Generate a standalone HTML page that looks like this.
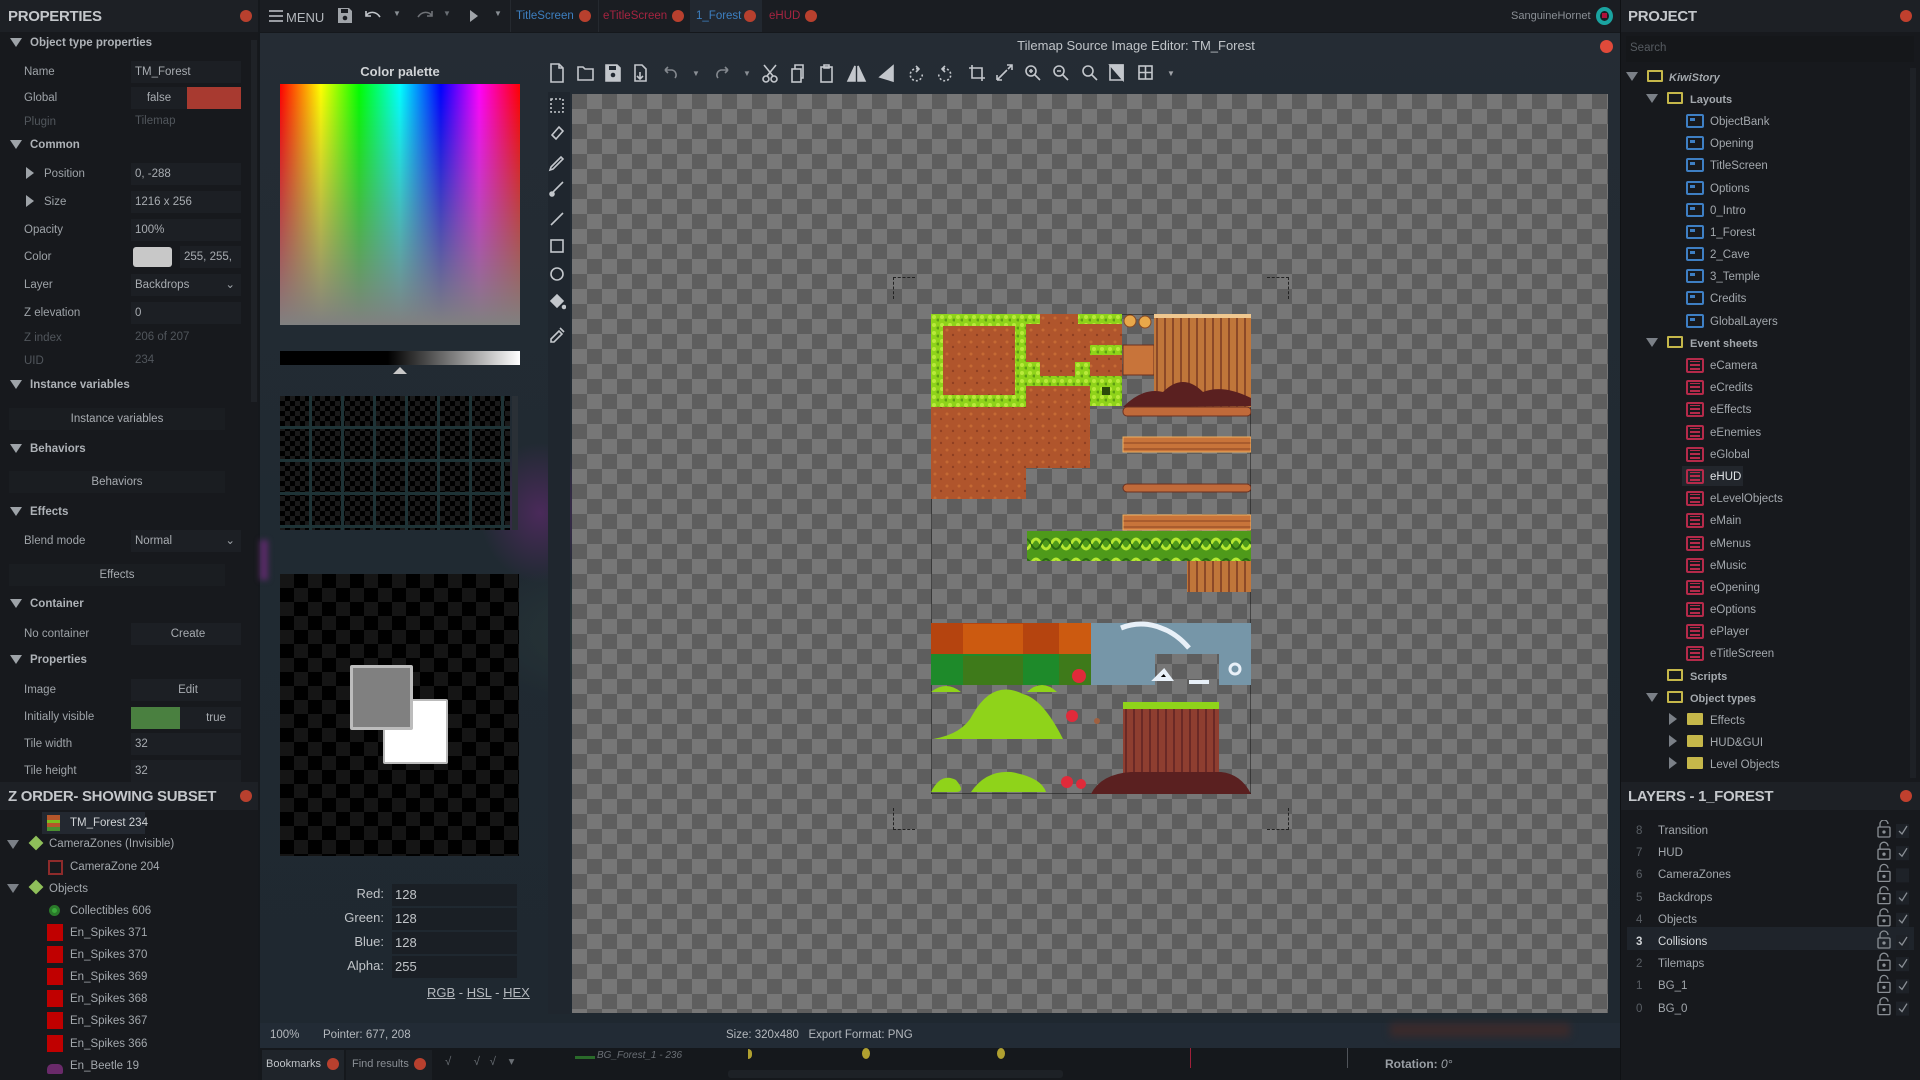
<!DOCTYPE html>
<html><head><meta charset="utf-8"><style>
*{margin:0;padding:0;box-sizing:border-box}
body{width:1920px;height:1080px;overflow:hidden;background:#15181c;font-family:"Liberation Sans",sans-serif;font-size:11.5px;color:#b4b8bd;position:relative}
.a{position:absolute;white-space:nowrap}
.hdr{font-weight:bold;font-size:15px;color:#c4c7cb;letter-spacing:-0.3px}
.dot{position:absolute;width:12px;height:12px;border-radius:50%;background:#b8402e}
.lbl{position:absolute;left:24px;color:#9ea3a8;line-height:14px}
.dim{color:#51565c}
.sec{position:absolute;left:10px;font-weight:bold;color:#aeb2b7}
.sec:before{content:"";display:inline-block;border-left:6px solid transparent;border-right:6px solid transparent;border-top:9px solid #9ea3a8;margin-right:8px;vertical-align:-1px}
.val{position:absolute;left:131px;width:110px;height:22px;background:#1c1f24;padding-left:4px;line-height:22px;color:#a8acb1}
.btn{position:absolute;left:30px;width:212px;height:22px;background:#1a1d21;text-align:center;line-height:22px;color:#a8acb1}
.tr{position:absolute;line-height:16px;color:#a3a8ad}
.tri{display:inline-block;border-left:6px solid transparent;border-right:6px solid transparent;border-top:9px solid #7b8087}
.fold{display:inline-block;width:16px;height:12px;border:2px solid #c5b74a;border-radius:1px;position:relative}
.lay{display:inline-block;width:18px;height:14px;border:2px solid #3e7fc4;border-radius:2px;position:relative}
.lay:after{content:"";position:absolute;left:2px;top:2px;width:5px;height:3px;background:#3e7fc4}
.ev{display:inline-block;width:18px;height:15px;border:2px solid #b52a4a;border-radius:2px;background:repeating-linear-gradient(#b52a4a 0 2px,transparent 2px 4px);background-clip:content-box;padding:1px 2px}
.ico{position:absolute;stroke:#c3c7cc;fill:none;stroke-width:1.6}
</style></head><body>

<!-- LEFT PANEL -->
<div class="a" style="left:0;top:0;width:258px;height:790px;background:#17191d"></div>
<div class="a" style="left:0;top:0;width:258px;height:32px;background:#1d2025"></div>
<div class="a hdr" style="left:8px;top:8px">PROPERTIES</div>
<div class="dot" style="left:240px;top:10px"></div>
<div class="a" style="left:251px;top:40px;width:6px;height:362px;background:#1f2227"></div>

<div class="sec" style="top:37px">Object type properties</div>
<div class="lbl" style="top:65px">Name</div><div class="val" style="top:61px">TM_Forest</div>
<div class="lbl" style="top:91px">Global</div><div class="val" style="top:87px;width:56px;text-align:center;padding:0">false</div><div class="a" style="left:187px;top:87px;width:54px;height:22px;background:#a83a30"></div>
<div class="lbl dim" style="top:115px">Plugin</div><div class="a dim" style="left:135px;top:115px">Tilemap</div>
<div class="sec" style="top:139px">Common</div>
<div class="lbl" style="top:167px;left:26px"><span style="display:inline-block;border-top:6px solid transparent;border-bottom:6px solid transparent;border-left:8px solid #9ea3a8;vertical-align:-2px;margin-right:10px"></span>Position</div><div class="val" style="top:163px">0, -288</div>
<div class="lbl" style="top:195px;left:26px"><span style="display:inline-block;border-top:6px solid transparent;border-bottom:6px solid transparent;border-left:8px solid #9ea3a8;vertical-align:-2px;margin-right:10px"></span>Size</div><div class="val" style="top:191px">1216 x 256</div>
<div class="lbl" style="top:223px">Opacity</div><div class="val" style="top:219px">100%</div>
<div class="lbl" style="top:250px">Color</div><div class="a" style="left:133px;top:247px;width:39px;height:20px;background:#c8c8c8;border-radius:3px"></div><div class="val" style="top:246px;left:180px;width:61px">255, 255,</div>
<div class="lbl" style="top:278px">Layer</div><div class="val" style="top:274px">Backdrops<span style="position:absolute;right:6px;color:#9ea3a8">⌄</span></div>
<div class="lbl" style="top:306px">Z elevation</div><div class="val" style="top:302px">0</div>
<div class="lbl dim" style="top:331px">Z index</div><div class="a dim" style="left:135px;top:331px">206 of 207</div>
<div class="lbl dim" style="top:354px">UID</div><div class="a dim" style="left:135px;top:354px">234</div>
<div class="sec" style="top:379px">Instance variables</div>
<div class="btn" style="top:408px;left:9px;width:216px">Instance variables</div>
<div class="sec" style="top:443px">Behaviors</div>
<div class="btn" style="top:471px;left:9px;width:216px">Behaviors</div>
<div class="sec" style="top:506px">Effects</div>
<div class="lbl" style="top:534px">Blend mode</div><div class="val" style="top:530px">Normal<span style="position:absolute;right:6px;color:#9ea3a8">⌄</span></div>
<div class="btn" style="top:564px;left:9px;width:216px">Effects</div>
<div class="sec" style="top:598px">Container</div>
<div class="lbl" style="top:627px">No container</div><div class="val" style="top:623px;text-align:center">Create</div>
<div class="sec" style="top:654px">Properties</div>
<div class="lbl" style="top:683px">Image</div><div class="val" style="top:679px;text-align:center">Edit</div>
<div class="lbl" style="top:710px">Initially visible</div><div class="val" style="top:707px;padding-left:60px;text-align:center">true</div><div class="a" style="left:131px;top:707px;width:49px;height:22px;background:#4a8040"></div>
<div class="lbl" style="top:737px">Tile width</div><div class="val" style="top:733px">32</div>
<div class="lbl" style="top:764px">Tile height</div><div class="val" style="top:760px">32</div>

<!-- Z ORDER -->
<div class="a" style="left:0;top:782px;width:258px;height:298px;background:#17191d"></div>
<div class="a" style="left:0;top:782px;width:258px;height:28px;background:#1d2025"></div>
<div class="a hdr" style="left:8px;top:788px">Z ORDER- SHOWING SUBSET</div>
<div class="dot" style="left:240px;top:790px"></div>
<div class="a" style="left:42px;top:812px;width:103px;height:22px;background:#232830"></div>
<div class="a" style="left:47px;top:815px;width:13px;height:16px;background:linear-gradient(#b5562a 0 30%,#7bbf20 30% 50%,#b5562a 50% 75%,#4a8f30 75%)"></div>
<div class="tr" style="left:70px;top:815px;color:#d0d3d6">TM_Forest 234</div>
<div class="tr" style="left:7px;top:838px"><span class="tri"></span></div>
<div class="a" style="left:29px;top:836px;width:14px;height:14px;background:#8fbf5a;transform:rotate(45deg) scale(.75)"></div>
<div class="tr" style="left:49px;top:836px">CameraZones (Invisible)</div>
<div class="a" style="left:48px;top:860px;width:15px;height:15px;border:2px solid #8e2b2b"></div>
<div class="tr dim" style="left:70px;top:859px">CameraZone 204</div>
<div class="tr" style="left:7px;top:882px"><span class="tri"></span></div>
<div class="a" style="left:29px;top:880px;width:14px;height:14px;background:#8fbf5a;transform:rotate(45deg) scale(.75)"></div>
<div class="tr" style="left:49px;top:881px">Objects</div>
<div class="a" style="left:49px;top:905px;width:11px;height:11px;border-radius:50%;background:#3aa83a;border:3px solid #2a7a2a"></div>
<div class="tr" style="left:70px;top:903px">Collectibles 606</div>
<div class="a" style="left:47px;top:924px;width:16px;height:17px;background:#c00000"></div><div class="tr" style="left:70px;top:925px">En_Spikes 371</div>
<div class="a" style="left:47px;top:946px;width:16px;height:17px;background:#c00000"></div><div class="tr" style="left:70px;top:947px">En_Spikes 370</div>
<div class="a" style="left:47px;top:968px;width:16px;height:17px;background:#c00000"></div><div class="tr" style="left:70px;top:969px">En_Spikes 369</div>
<div class="a" style="left:47px;top:990px;width:16px;height:17px;background:#c00000"></div><div class="tr" style="left:70px;top:991px">En_Spikes 368</div>
<div class="a" style="left:47px;top:1012px;width:16px;height:17px;background:#c00000"></div><div class="tr" style="left:70px;top:1013px">En_Spikes 367</div>
<div class="a" style="left:47px;top:1035px;width:16px;height:17px;background:#c00000"></div><div class="tr" style="left:70px;top:1036px">En_Spikes 366</div>
<div class="a" style="left:47px;top:1064px;width:16px;height:10px;background:#6a2a6a;border-radius:5px 5px 2px 2px"></div><div class="tr" style="left:70px;top:1058px">En_Beetle 19</div>

<!-- TOP BAR middle -->
<div class="a" style="left:260px;top:0;width:1360px;height:32px;background:#1a1d22"></div>
<svg class="ico" style="left:268px;top:9px" width="16" height="14"><path d="M1 2h14M1 7h14M1 12h14"/></svg>
<div class="a" style="left:286px;top:10px;color:#b4b8bd;font-size:13px">MENU</div>
<svg class="a" style="left:337px;top:7px" width="16" height="17"><path d="M1 1h11l3 3v12H1z" fill="#a0a4a9"/><rect x="4" y="2" width="7" height="4" fill="#1a1d22"/><circle cx="8" cy="11" r="2.3" fill="#1a1d22"/></svg>
<svg class="ico" style="left:364px;top:9px" width="20" height="12"><path d="M2 2v5h5M2 7c3-5 10-5 14 1"/></svg>
<div class="a" style="left:393px;top:9px;font-size:8px;color:#8a8f95">▼</div>
<svg class="ico" style="left:414px;top:9px;opacity:.5" width="20" height="12"><path d="M18 2v5h-5M18 7c-3-5-10-5-14 1"/></svg>
<div class="a" style="left:443px;top:9px;font-size:8px;color:#6a6f75">▼</div>
<svg class="a" style="left:469px;top:9px" width="10" height="14"><path d="M1 1l8 6-8 6z" fill="#a0a4a9"/></svg>
<div class="a" style="left:494px;top:9px;font-size:8px;color:#8a8f95">▼</div>
<div class="a" style="left:510px;top:0;width:88px;height:32px;border-left:1px solid #25292f"></div>
<div class="a" style="left:516px;top:10px;color:#3d7fc0">TitleScreen</div><div class="dot" style="left:579px;top:10px"></div>
<div class="a" style="left:598px;top:0;width:92px;height:32px;border-left:1px solid #25292f"></div>
<div class="a" style="left:603px;top:10px;color:#a52440">eTitleScreen</div><div class="dot" style="left:672px;top:10px"></div>
<div class="a" style="left:690px;top:0;width:72px;height:32px;background:#222830"></div>
<div class="a" style="left:696px;top:10px;color:#3d7fc0">1_Forest</div><div class="dot" style="left:744px;top:10px"></div>
<div class="a" style="left:769px;top:10px;color:#a52440">eHUD</div><div class="dot" style="left:805px;top:10px"></div>
<div class="a" style="left:1511px;top:10px;color:#8a8f95;font-size:11px">SanguineHornet</div>
<div class="a" style="left:1596px;top:7px;width:17px;height:18px;border-radius:50%;border:4px solid #1aa3a0"></div><div class="a" style="left:1602px;top:13px;width:5px;height:5px;background:#b0103a"></div>

<!-- EDITOR BG -->
<div class="a" style="left:260px;top:33px;width:1360px;height:1015px;background:radial-gradient(ellipse 60px 70px at 280px 480px,#4a2a5a,transparent),radial-gradient(ellipse 200px 80px at 400px 600px,#2a3a3a,transparent),linear-gradient(#252c34,#202a32 50%,#1f2830)"></div>
<div class="a" style="left:260px;top:540px;width:8px;height:40px;background:#5a2a68;filter:blur(3px)"></div>
<div class="a" style="left:1136px;top:38px;color:#c0c4c8;font-size:13px;transform:translateX(-50%)">Tilemap Source Image Editor: TM_Forest</div>
<div class="a" style="left:1600px;top:40px;width:13px;height:13px;border-radius:50%;background:#e04a3a"></div>

<!-- Color palette -->
<div class="a" style="left:400px;top:64px;color:#d0d3d6;font-weight:bold;font-size:13px;transform:translateX(-50%)">Color palette</div>
<div class="a" style="left:280px;top:84px;width:240px;height:241px;background:linear-gradient(transparent,#808080),linear-gradient(90deg,#f00,#ff0 17%,#0f0 33%,#0ff 50%,#00f 67%,#f0f 83%,#f00)"></div>
<div class="a" style="left:280px;top:351px;width:240px;height:14px;background:linear-gradient(90deg,#000 45%,#fff)"></div>
<div class="a" style="left:393px;top:367px;border-left:7px solid transparent;border-right:7px solid transparent;border-bottom:7px solid #c8c8c8"></div>
<div class="a" style="left:280px;top:396px;width:230px;height:134px;background:repeating-linear-gradient(90deg,transparent 0 29px,#1e3336 29px 32px),repeating-linear-gradient(transparent 0 30px,#1e3336 30px 33px),repeating-conic-gradient(#000 0 25%,#1a1a1a 0 50%) 0 0/10px 10px"></div>
<div class="a" style="left:512px;top:396px;width:6px;height:134px;background:#2a3036"></div>
<div class="a" style="left:280px;top:574px;width:239px;height:282px;background:repeating-conic-gradient(#000 0 25%,#151515 0 50%) 0 0/28px 28px"></div>
<div class="a" style="left:383px;top:699px;width:65px;height:65px;background:#fff;border:2px solid #bbb;border-radius:2px"></div>
<div class="a" style="left:350px;top:665px;width:63px;height:65px;background:#808080;border:3px solid #bcbcbc;border-radius:2px"></div>
<div class="a" style="left:300px;top:886px;width:84px;text-align:right;color:#c0c4c8;font-size:13px">Red:</div>
<div class="a" style="left:300px;top:910px;width:84px;text-align:right;color:#c0c4c8;font-size:13px">Green:</div>
<div class="a" style="left:300px;top:934px;width:84px;text-align:right;color:#c0c4c8;font-size:13px">Blue:</div>
<div class="a" style="left:300px;top:958px;width:84px;text-align:right;color:#c0c4c8;font-size:13px">Alpha:</div>
<div class="a" style="left:392px;top:884px;width:125px;height:22px;background:#1a1f25;padding-left:3px;line-height:22px;color:#c0c4c8;font-size:13px">128</div>
<div class="a" style="left:392px;top:908px;width:125px;height:22px;background:#1a1f25;padding-left:3px;line-height:22px;color:#c0c4c8;font-size:13px">128</div>
<div class="a" style="left:392px;top:932px;width:125px;height:22px;background:#1a1f25;padding-left:3px;line-height:22px;color:#c0c4c8;font-size:13px">128</div>
<div class="a" style="left:392px;top:956px;width:125px;height:22px;background:#1a1f25;padding-left:3px;line-height:22px;color:#c0c4c8;font-size:13px">255</div>
<div class="a" style="left:427px;top:985px;color:#b4b8bd;font-size:13px"><u>RGB</u> - <u>HSL</u> - <u>HEX</u></div>

<!-- tools column -->
<div class="a" style="left:548px;top:92px;width:22px;height:922px;background:#1f262e"></div>
<svg class="ico" style="left:548px;top:96px" width="18" height="250">
<rect x="3" y="3" width="12" height="13" stroke-dasharray="2 2"/>
<path d="M4 39l7-8 4 4-7 8z M4 39l3 3"/>
<path d="M3 71l10-10 2 2-10 10-3 1z"/>
<path d="M3 99l3-4 9-9"/><circle cx="4" cy="98" r="2" fill="#c3c7cc"/>
<path d="M3 129l12-12"/>
<rect x="3" y="144" width="12" height="12"/>
<circle cx="9" cy="178" r="6"/>
<path d="M3 205l6-6 6 6-6 6z" fill="#c3c7cc"/><circle cx="16" cy="211" r="1.5" fill="#c3c7cc"/>
<path d="M3 243l8-8 3 3-8 8-3 0z M12 232l4 4"/>
</svg>
<!-- top toolbar -->
<svg class="ico" style="left:548px;top:62px" width="640" height="22">
<g transform="translate(2,0)"><path d="M1 2h8l4 4v14H1z M9 2v4h4"/></g>
<g transform="translate(29,0)"><path d="M1 5h5l2 2h8v11H1z"/></g>
<g transform="translate(57,0)"><path d="M1 3h11l3 3v13H1z" fill="#c3c7cc"/><rect x="4" y="4" width="7" height="4" fill="#222a33" stroke="none"/><circle cx="8" cy="13" r="2.3" fill="#222a33" stroke="none"/></g>
<g transform="translate(86,0)"><path d="M1 3h7l4 4v12H1z M6 10v7 M3 14l3 3 3-3"/></g>
<g transform="translate(115,0)" opacity=".6"><path d="M2 8h7a5 5 0 0 1 3 8 M2 8l3-3M2 8l3 3"/></g>
<text x="144" y="14" font-size="8" fill="#8a8f95" stroke="none">▼</text>
<g transform="translate(166,0)" opacity=".6"><path d="M14 8h-7a5 5 0 0 0-3 8 M14 8l-3-3M14 8l-3 3"/></g>
<text x="195" y="14" font-size="8" fill="#8a8f95" stroke="none">▼</text>
<g transform="translate(214,0)"><circle cx="4" cy="17" r="3"/><circle cx="12" cy="17" r="3"/><path d="M5 14l9-11M11 14l-9-11"/></g>
<g transform="translate(243,0)"><rect x="1" y="7" width="9" height="13"/><path d="M4 7V3h8v13h-2"/></g>
<g transform="translate(271,0)"><rect x="2" y="5" width="11" height="15"/><path d="M5 3h5v3h-5z"/></g>
<g transform="translate(300,0)"><path d="M7 4v15h-7z M10 4v15h7z" fill="#c3c7cc"/></g>
<g transform="translate(331,0)"><path d="M14 4v15L1 15z" fill="#c3c7cc"/></g>
<g transform="translate(360,0)"><path d="M10 7a6 6 0 1 0 4 4" stroke-dasharray="2 2"/><path d="M8 4l3 3-3 3"/></g>
<g transform="translate(389,0)"><path d="M6 7a6 6 0 1 1-4 4" stroke-dasharray="2 2"/><path d="M8 4l-3 3 3 3"/></g>
<g transform="translate(420,0)"><path d="M4 3v13h13 M1 6h13v13"/></g>
<g transform="translate(448,0)"><path d="M1 18l10-10 M1 18v-5M1 18h5 M11 3h5v5M16 3l-4 4"/></g>
<g transform="translate(476,0)"><circle cx="7" cy="9" r="5"/><path d="M11 13l5 5 M5 9h4M7 7v4"/></g>
<g transform="translate(504,0)"><circle cx="7" cy="9" r="5"/><path d="M11 13l5 5 M5 9h4"/></g>
<g transform="translate(533,0)"><circle cx="7" cy="9" r="5"/><path d="M11 13l5 5"/></g>
<g transform="translate(561,0)"><path d="M1 3h13v15H1z"/><path d="M1 3l13 15V3z" fill="#c3c7cc"/></g>
<g transform="translate(590,0)"><rect x="1" y="4" width="13" height="13"/><path d="M7.5 4v13M1 10.5h13"/></g>
</svg>
<div class="a" style="left:1167px;top:69px;font-size:8px;color:#a0a4a9">▼</div>

<!-- canvas -->
<div class="a" style="left:572px;top:94px;width:1036px;height:919px;background:repeating-conic-gradient(#777 0 25%,#5e5e5e 0 50%) 0 0/30px 30px"></div>
<div class="a" style="left:893px;top:277px;width:22px;height:22px;border-left:1px dashed #222;border-top:1px dashed #222"></div>
<div class="a" style="left:1267px;top:277px;width:22px;height:22px;border-right:1px dashed #222;border-top:1px dashed #222"></div>
<div class="a" style="left:893px;top:808px;width:22px;height:22px;border-left:1px dashed #222;border-bottom:1px dashed #222"></div>
<div class="a" style="left:1267px;top:808px;width:22px;height:22px;border-right:1px dashed #222;border-bottom:1px dashed #222"></div>

<svg class="a" style="left:931px;top:314px" width="320" height="480" viewBox="0 0 320 480">
<defs>
<pattern id="d" width="12" height="12" patternUnits="userSpaceOnUse"><rect width="12" height="12" fill="#b0552c"/><circle cx="4" cy="4" r="1.5" fill="#c66a34"/><circle cx="10" cy="9" r="1.2" fill="#8f3f22"/></pattern>
<pattern id="g" width="8" height="8" patternUnits="userSpaceOnUse"><rect width="8" height="8" fill="#8fd31a"/><circle cx="3" cy="3" r="2" fill="#b8ea3a"/><circle cx="7" cy="6" r="1.5" fill="#5e9e12"/></pattern>
<pattern id="w" width="10" height="6" patternUnits="userSpaceOnUse"><rect width="10" height="6" fill="#c8743a"/><path d="M0 3h10" stroke="#8a4322"/></pattern>
<pattern id="v" width="20" height="20" patternUnits="userSpaceOnUse"><rect width="20" height="20" fill="#4e9a1a"/><path d="M0 10q5-10 10 0t10 0" stroke="#b6e832" stroke-width="3" fill="none"/><path d="M0 10q5 10 10 0t10 0" stroke="#2a6a12" stroke-width="2" fill="none"/></pattern>
<pattern id="t" width="8" height="8" patternUnits="userSpaceOnUse"><rect width="8" height="8" fill="#c0763a"/><path d="M2 0v8" stroke="#7a3a22" stroke-width="1.5"/></pattern>
<pattern id="t2" width="8" height="8" patternUnits="userSpaceOnUse"><rect width="8" height="8" fill="#8e3e30"/><path d="M3 0v8" stroke="#5e2222" stroke-width="1.5"/></pattern>
</defs>
<rect width="320" height="480" fill="none" stroke="#111" stroke-width="1"/>
<rect x="0" y="0" width="96" height="93" fill="url(#g)"/><rect x="12" y="12" width="72" height="69" fill="url(#d)"/>
<rect x="0" y="93" width="95" height="92" fill="url(#d)"/>
<rect x="95" y="0" width="96" height="62" fill="url(#d)"/>
<rect x="95" y="62" width="64" height="92" fill="url(#d)"/>
<rect x="95" y="0" width="14" height="10" fill="url(#g)"/><rect x="147" y="0" width="44" height="10" fill="url(#g)"/>
<rect x="95" y="62" width="64" height="10" fill="url(#g)"/><rect x="95" y="48" width="14" height="14" fill="url(#g)"/><rect x="144" y="48" width="15" height="14" fill="url(#g)"/>
<rect x="159" y="31" width="32" height="10" fill="url(#g)"/>
<rect x="159" y="62" width="32" height="30" fill="url(#g)"/><rect x="171" y="73" width="8" height="8" fill="#2a4a0a"/>
<circle cx="199" cy="7" r="6" fill="#e8a84a" stroke="#8a4a22"/><circle cx="214" cy="8" r="6" fill="#e8a84a" stroke="#8a4a22"/>
<rect x="192" y="31" width="31" height="30" fill="#c8743a" stroke="#6a3020"/>
<rect x="223" y="0" width="97" height="93" fill="url(#t)"/><rect x="223" y="0" width="97" height="4" fill="#f0c890"/>
<path d="M192 93q20-20 40-15q20-20 40 0q20-8 48 6v8z" fill="#5a2020"/>
<rect x="192" y="93" width="128" height="9" rx="4" fill="#c06a3a" stroke="#6a3020"/>
<rect x="192" y="123" width="128" height="15" fill="url(#w)" stroke="#f0b060"/>
<rect x="192" y="170" width="128" height="8" rx="4" fill="#c06a3a" stroke="#6a3020"/>
<rect x="192" y="201" width="128" height="15" fill="url(#w)" stroke="#f0b060"/>
<rect x="96" y="217" width="224" height="30" fill="url(#v)"/>
<rect x="256" y="247" width="64" height="31" fill="url(#t)"/>
<rect x="0" y="309" width="160" height="31" fill="#b5440f"/><rect x="32" y="310" width="60" height="30" fill="#cc5a10"/><rect x="128" y="309" width="32" height="31" fill="#cc5a10"/>
<rect x="0" y="340" width="160" height="31" fill="#1e8a2a"/><rect x="32" y="342" width="60" height="29" fill="#3e7a1a"/><rect x="128" y="340" width="32" height="31" fill="#3e7a1a"/>
<rect x="160" y="309" width="160" height="31" fill="#7696a8"/><rect x="160" y="340" width="64" height="31" fill="#7696a8"/><rect x="288" y="340" width="32" height="31" fill="#7696a8"/>
<rect x="224" y="309" width="32" height="31" fill="#7696a8"/><path d="M190 314q20-8 40 0q15 5 28 20" stroke="#e8f0f8" stroke-width="5" fill="none"/>
<path d="M225 365l8-8 6 8z M258 368h20" stroke="#e8f0f8" stroke-width="4"/><circle cx="304" cy="355" r="5" fill="none" stroke="#e8f0f8" stroke-width="3"/>
<path d="M0 378q15-12 30 0z" fill="#8fd31a"/><path d="M2 425q30-5 40-25q20-35 50-20q20 5 40 45z" fill="#8fd31a"/><path d="M96 378q15-14 30 0z" fill="#8fd31a"/>
<path d="M0 478q10-20 25-12q10 12 0 12z" fill="#8fd31a"/><path d="M40 478q15-22 40-20q30 5 35 20z" fill="#8fd31a"/>
<circle cx="148" cy="362" r="7" fill="#e02a3a"/><circle cx="141" cy="402" r="6" fill="#e02a3a"/><circle cx="136" cy="468" r="6" fill="#e02a3a"/><circle cx="150" cy="470" r="5" fill="#e02a3a"/><circle cx="166" cy="407" r="3" fill="#a06040"/>
<rect x="192" y="393" width="96" height="72" fill="url(#t2)"/><rect x="192" y="388" width="96" height="7" fill="#8fd31a"/>
<path d="M160 480q10-20 40-22h90q20 2 30 22z" fill="#5a2020"/>
</svg>

<!-- status bar -->
<div class="a" style="left:260px;top:1023px;width:1360px;height:25px;background:#222b35"></div>
<div class="a" style="left:1390px;top:1023px;width:180px;height:14px;background:#4a2a25;filter:blur(4px);opacity:.6"></div>
<div class="a" style="left:270px;top:1029px;color:#b4b8bd">100%</div>
<div class="a" style="left:323px;top:1029px;color:#b4b8bd">Pointer: 677, 208</div>
<div class="a" style="left:726px;top:1029px;color:#b4b8bd">Size: 320x480&nbsp;&nbsp;&nbsp;Export Format: PNG</div>
<div class="a" style="left:260px;top:1048px;width:1360px;height:32px;background:#15181c"></div>
<div class="a" style="left:262px;top:1050px;width:82px;height:30px;background:#1f242a"></div>
<div class="a" style="left:266px;top:1058px;color:#c0c4c8;font-size:11px">Bookmarks</div><div class="dot" style="left:327px;top:1058px"></div>
<div class="a" style="left:346px;top:1050px;width:86px;height:30px;background:#1b1f24"></div>
<div class="a" style="left:352px;top:1058px;color:#8a8f95;font-size:11px">Find results</div><div class="dot" style="left:414px;top:1058px"></div>
<div class="a" style="left:445px;top:1054px;color:#6a6f75">√ &nbsp;&nbsp;&nbsp;&nbsp;&nbsp; √ &nbsp; √ &nbsp;&nbsp; ▾ </div>
<div class="a" style="left:575px;top:1056px;width:20px;height:3px;background:#2a6a2a"></div>
<div class="a" style="left:597px;top:1050px;color:#6a6f75;font-style:italic;font-size:10px">BG_Forest_1 - 236</div>
<div class="a" style="left:748px;top:1049px;width:4px;height:10px;background:#b0a030;border-radius:0 5px 5px 0"></div>
<div class="a" style="left:862px;top:1048px;width:8px;height:11px;background:#b0a030;border-radius:50%"></div>
<div class="a" style="left:997px;top:1048px;width:8px;height:11px;background:#b0a030;border-radius:50%"></div>
<div class="a" style="left:1190px;top:1048px;width:1px;height:20px;background:#a0203a"></div>
<div class="a" style="left:1347px;top:1048px;width:1px;height:20px;background:#50545a"></div>
<div class="a" style="left:728px;top:1070px;width:335px;height:8px;background:#1d2126;border-radius:3px"></div>
<div class="a" style="left:1385px;top:1057px;color:#9a9fa5;font-weight:bold;font-size:12px">Rotation: <i style="font-weight:normal">0°</i></div>

<!-- RIGHT PANEL -->
<div class="a" style="left:1620px;top:0;width:300px;height:1080px;background:#17191d;border-left:1px solid #0f1114"></div>
<div class="a" style="left:1621px;top:0;width:299px;height:32px;background:#1d2025"></div>
<div class="a hdr" style="left:1628px;top:8px">PROJECT</div>
<div class="dot" style="left:1900px;top:10px;background:#c0402e"></div>
<div class="a" style="left:1626px;top:36px;width:288px;height:26px;background:#15171a"></div>
<div class="a" style="left:1630px;top:42px;color:#565b61">Search</div>
<div class="a" style="left:1910px;top:68px;width:6px;height:710px;background:#1e2126"></div>

<div class="tr" style="left:1626px;top:70px"><span class="tri"></span></div><div class="tr" style="left:1647px;top:70px"><span class="fold"></span></div><div class="tr" style="left:1669px;top:70px;font-weight:bold;font-style:italic;font-size:11px">KiwiStory</div>
<div class="tr" style="left:1646px;top:92px"><span class="tri"></span></div><div class="tr" style="left:1667px;top:92px"><span class="fold"></span></div><div class="tr" style="left:1690px;top:92px;font-weight:bold;font-size:11px">Layouts</div>
<div class="tr" style="left:1686px;top:114px"><span class="lay"></span></div><div class="tr" style="left:1710px;top:114px">ObjectBank</div>
<div class="tr" style="left:1686px;top:136px"><span class="lay"></span></div><div class="tr" style="left:1710px;top:136px">Opening</div>
<div class="tr" style="left:1686px;top:158px"><span class="lay"></span></div><div class="tr" style="left:1710px;top:158px">TitleScreen</div>
<div class="tr" style="left:1686px;top:181px"><span class="lay"></span></div><div class="tr" style="left:1710px;top:181px">Options</div>
<div class="tr" style="left:1686px;top:203px"><span class="lay"></span></div><div class="tr" style="left:1710px;top:203px">0_Intro</div>
<div class="tr" style="left:1686px;top:225px"><span class="lay"></span></div><div class="tr" style="left:1710px;top:225px">1_Forest</div>
<div class="tr" style="left:1686px;top:247px"><span class="lay"></span></div><div class="tr" style="left:1710px;top:247px">2_Cave</div>
<div class="tr" style="left:1686px;top:269px"><span class="lay"></span></div><div class="tr" style="left:1710px;top:269px">3_Temple</div>
<div class="tr" style="left:1686px;top:291px"><span class="lay"></span></div><div class="tr" style="left:1710px;top:291px">Credits</div>
<div class="tr" style="left:1686px;top:314px"><span class="lay"></span></div><div class="tr" style="left:1710px;top:314px">GlobalLayers</div>
<div class="tr" style="left:1646px;top:336px"><span class="tri"></span></div><div class="tr" style="left:1667px;top:336px"><span class="fold"></span></div><div class="tr" style="left:1690px;top:336px;font-weight:bold;font-size:11px">Event sheets</div>
<div class="tr" style="left:1686px;top:358px"><span class="ev"></span></div><div class="tr" style="left:1710px;top:358px">eCamera</div>
<div class="tr" style="left:1686px;top:380px"><span class="ev"></span></div><div class="tr" style="left:1710px;top:380px">eCredits</div>
<div class="tr" style="left:1686px;top:402px"><span class="ev"></span></div><div class="tr" style="left:1710px;top:402px">eEffects</div>
<div class="tr" style="left:1686px;top:425px"><span class="ev"></span></div><div class="tr" style="left:1710px;top:425px">eEnemies</div>
<div class="tr" style="left:1686px;top:447px"><span class="ev"></span></div><div class="tr" style="left:1710px;top:447px">eGlobal</div>
<div class="a" style="left:1682px;top:466px;width:61px;height:20px;background:#22262c"></div>
<div class="tr" style="left:1686px;top:469px"><span class="ev"></span></div><div class="tr" style="left:1710px;top:469px;color:#e0e3e6">eHUD</div>
<div class="tr" style="left:1686px;top:491px"><span class="ev"></span></div><div class="tr" style="left:1710px;top:491px">eLevelObjects</div>
<div class="tr" style="left:1686px;top:513px"><span class="ev"></span></div><div class="tr" style="left:1710px;top:513px">eMain</div>
<div class="tr" style="left:1686px;top:536px"><span class="ev"></span></div><div class="tr" style="left:1710px;top:536px">eMenus</div>
<div class="tr" style="left:1686px;top:558px"><span class="ev"></span></div><div class="tr" style="left:1710px;top:558px">eMusic</div>
<div class="tr" style="left:1686px;top:580px"><span class="ev"></span></div><div class="tr" style="left:1710px;top:580px">eOpening</div>
<div class="tr" style="left:1686px;top:602px"><span class="ev"></span></div><div class="tr" style="left:1710px;top:602px">eOptions</div>
<div class="tr" style="left:1686px;top:624px"><span class="ev"></span></div><div class="tr" style="left:1710px;top:624px">ePlayer</div>
<div class="tr" style="left:1686px;top:646px"><span class="ev"></span></div><div class="tr" style="left:1710px;top:646px">eTitleScreen</div>
<div class="tr" style="left:1667px;top:669px"><span class="fold"></span></div><div class="tr" style="left:1690px;top:669px;font-weight:bold;font-size:11px">Scripts</div>
<div class="tr" style="left:1646px;top:691px"><span class="tri"></span></div><div class="tr" style="left:1667px;top:691px"><span class="fold"></span></div><div class="tr" style="left:1690px;top:691px;font-weight:bold;font-size:11px">Object types</div>
<div class="tr" style="left:1669px;top:713px"><span style="display:inline-block;border-top:6px solid transparent;border-bottom:6px solid transparent;border-left:8px solid #7b8087"></span></div><div class="tr" style="left:1687px;top:713px"><span class="fold" style="background:#c5b74a"></span></div><div class="tr" style="left:1710px;top:713px">Effects</div>
<div class="tr" style="left:1669px;top:735px"><span style="display:inline-block;border-top:6px solid transparent;border-bottom:6px solid transparent;border-left:8px solid #7b8087"></span></div><div class="tr" style="left:1687px;top:735px"><span class="fold" style="background:#c5b74a"></span></div><div class="tr" style="left:1710px;top:735px">HUD&amp;GUI</div>
<div class="tr" style="left:1669px;top:757px"><span style="display:inline-block;border-top:6px solid transparent;border-bottom:6px solid transparent;border-left:8px solid #7b8087"></span></div><div class="tr" style="left:1687px;top:757px"><span class="fold" style="background:#c5b74a"></span></div><div class="tr" style="left:1710px;top:757px">Level Objects</div>

<!-- LAYERS -->
<div class="a" style="left:1621px;top:782px;width:299px;height:28px;background:#1d2025"></div>
<div class="a hdr" style="left:1628px;top:788px">LAYERS - 1_FOREST</div>
<div class="dot" style="left:1900px;top:790px;background:#c0402e"></div>
<div class="a" style="left:1627px;top:927px;width:287px;height:23px;background:#1f242b"></div>
<div class="a" style="left:1636px;top:820px;line-height:22.2px;color:#5a5f65">8<br>7<br>6<br>5<br>4<br><b style="color:#d0d3d6">3</b><br>2<br>1<br>0</div>
<div class="a" style="left:1658px;top:820px;line-height:22.2px;color:#a3a8ad">Transition<br>HUD<br>CameraZones<br>Backdrops<br>Objects<br><b style="color:#d8dbde;font-weight:normal">Collisions</b><br>Tilemaps<br>BG_1<br>BG_0</div>
<svg class="a" style="left:1877px;top:820px" width="40" height="200" fill="none" stroke="#8a8f95" stroke-width="1.3">
<g id="r"><rect x="1" y="7" width="12" height="10" rx="1"/><path d="M3 7V4a4 4 0 0 1 8 0"/><circle cx="7" cy="12" r="1" fill="#8a8f95"/><rect x="19" y="4" width="13" height="14" fill="#1e2228" stroke="none"/><path d="M22 11l3 3 5-8"/></g>
<use href="#r" y="22.2"/>
<g transform="translate(0,44.4)"><rect x="1" y="7" width="12" height="10" rx="1"/><path d="M3 7V4a4 4 0 0 1 8 0"/><circle cx="7" cy="12" r="1" fill="#8a8f95"/><rect x="19" y="4" width="13" height="14" fill="#1e2228" stroke="none"/></g>
<use href="#r" y="66.6"/><use href="#r" y="88.8"/><use href="#r" y="111"/><use href="#r" y="133.2"/><use href="#r" y="155.4"/><use href="#r" y="177.6"/>
</svg>
</body></html>
